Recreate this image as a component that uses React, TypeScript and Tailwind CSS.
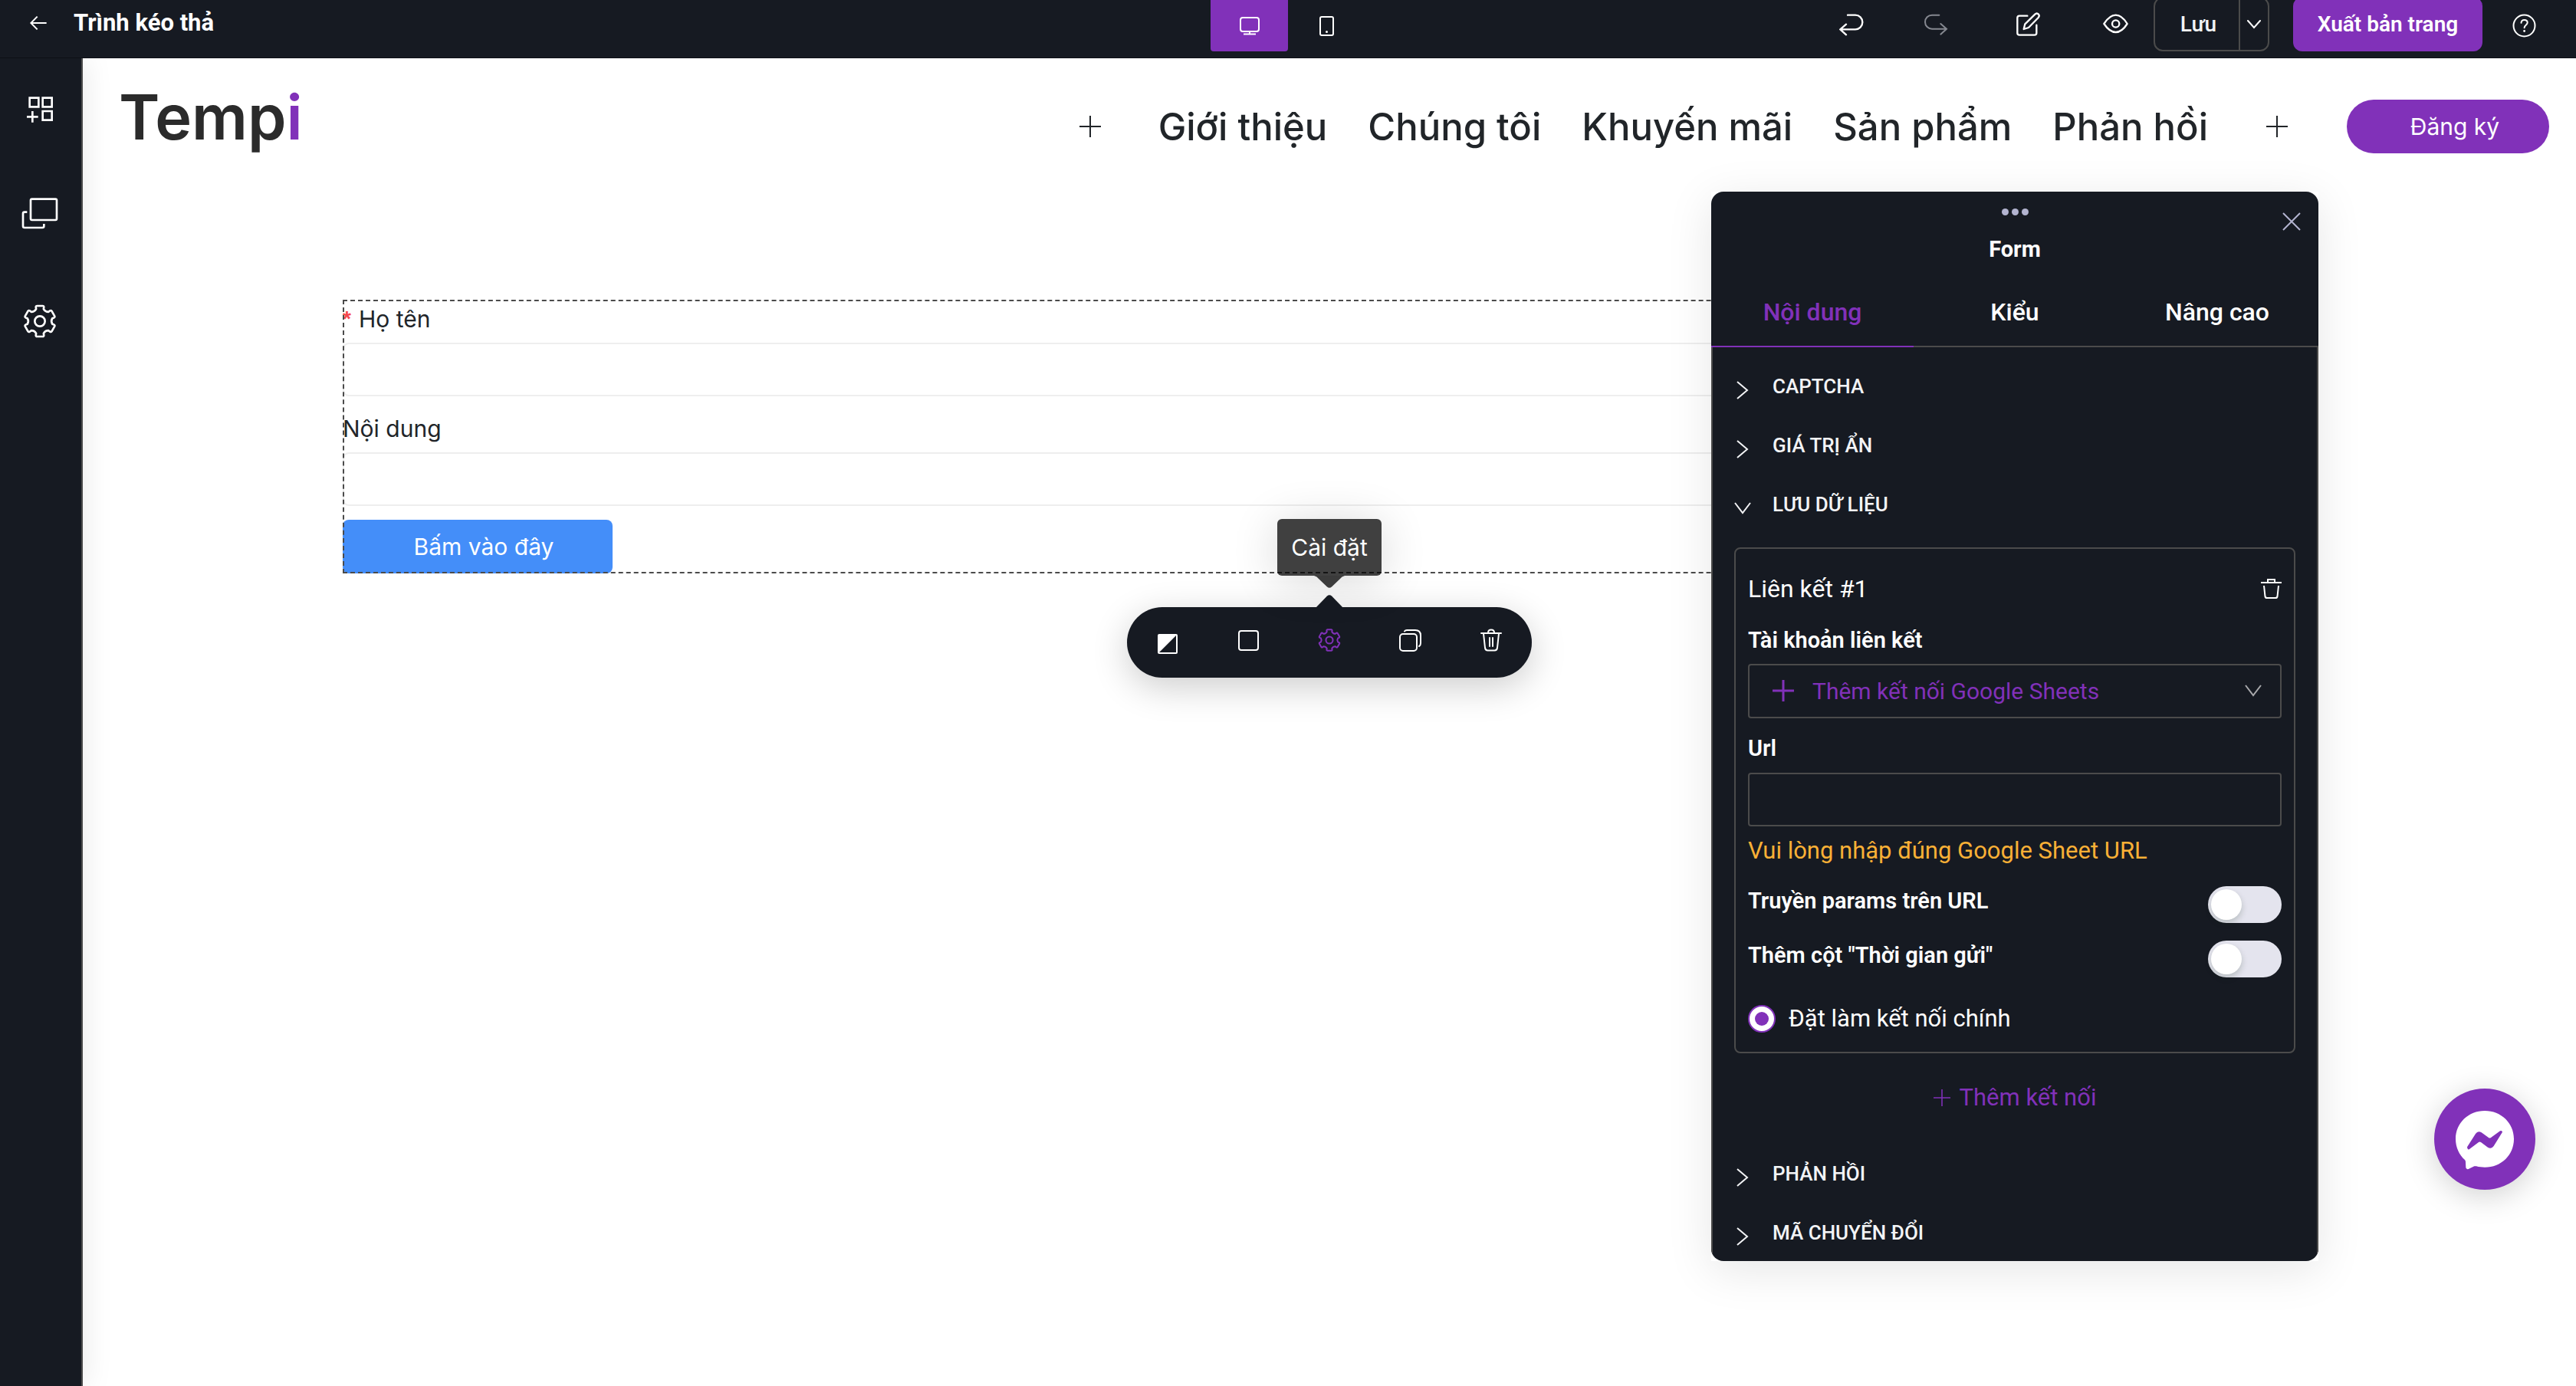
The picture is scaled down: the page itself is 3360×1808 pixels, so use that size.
import type { ReactNode } from "react";

const polar = (r: number, deg: number) => {
  const a = ((deg - 90) * Math.PI) / 180;
  return `${(66 + r * Math.cos(a)).toFixed(2)} ${(66 + r * Math.sin(a)).toFixed(2)}`;
};

const gearOutline =
  [0, 60, 120, 180, 240, 300]
    .map(
      (t, i) =>
        `${i === 0 ? "M" : "L"}${polar(57, t - 16)} Q${polar(62, t - 15)} ${polar(61, t - 10)} L${polar(61, t + 10)} Q${polar(62, t + 15)} ${polar(57, t + 16)} L${polar(50, t + 17)} Q${polar(42, t + 30)} ${polar(50, t + 43)}`,
    )
    .join(" ") + "Z";

function Gear({ className, stroke = 8 }: { className: string; stroke?: number }) {
  return (
    <svg viewBox="0 0 132 132" className={className} fill="none" stroke="currentColor" strokeWidth={stroke} strokeLinejoin="round">
      <path d={gearOutline} />
      <circle cx="66" cy="66" r="20" />
    </svg>
  );
}

function Plus({ className }: { className: string }) {
  return (
    <svg viewBox="0 0 28 28" className={className} fill="none" stroke="currentColor" strokeWidth="2">
      <path d="M14 0V28M0 14H28" />
    </svg>
  );
}

function ChevronRight() {
  return (
    <svg viewBox="0 0 22 24" className="h-6 w-[22px]" fill="none" stroke="currentColor" strokeWidth="2">
      <path d="M4 1L17 12L4 23" />
    </svg>
  );
}

function ChevronDown({ className }: { className: string }) {
  return (
    <svg viewBox="0 0 22 16" className={className} fill="none" stroke="currentColor" strokeWidth="2">
      <path d="M1 1L11 14L21 1" />
    </svg>
  );
}

function TopBar() {
  return (
    <header className="relative z-20 grid h-[76px] grid-cols-[1fr_auto_1fr] items-start overflow-hidden border-b border-[#0c0f16] bg-[#161a22] text-white">
      <div className="flex h-[59px] items-center gap-[35px] pl-[39px]">
        <button aria-label="Quay lại">
          <svg viewBox="0 0 66 54" className="h-[18px] w-[22px]" fill="none" stroke="currentColor" strokeWidth="6">
            <path d="M65 27H4M29 2L4 27L29 52" />
          </svg>
        </button>
        <h1 className="text-[31px] leading-10 font-bold">Trình kéo thả</h1>
      </div>

      <div className="-mt-1 flex h-[71px]">
        <button aria-label="Máy tính" className="flex w-[101px] items-center justify-center rounded-b bg-[#8131b9] pt-1">
          <svg viewBox="0 0 26 24" className="h-6 w-[26px]" fill="none" stroke="currentColor" strokeWidth="2">
            <rect x="1" y="1" width="24" height="18" rx="3" />
            <path d="M13 19V22M5 22.500H21" />
          </svg>
        </button>
        <button aria-label="Điện thoại" className="flex w-[101px] items-center justify-center pt-1">
          <svg viewBox="0 0 20 26" className="h-[26px] w-5" fill="none" stroke="currentColor" strokeWidth="2">
            <rect x="1" y="1" width="17" height="24" rx="2" />
            <circle cx="9.500" cy="20.500" r="1.500" fill="currentColor" stroke="none" />
          </svg>
        </button>
      </div>

      <div className="-mt-1 flex h-[71px] items-center justify-end pr-[51px]">
        <button aria-label="Hoàn tác" className="mr-[78px]">
          <svg viewBox="87 50 96 96" className="size-8" fill="none" stroke="currentColor" strokeWidth="7" strokeLinecap="round">
            <path d="M120 61H150A28 28 0 0 1 150 117H92M114 97L91 117L114 138" />
          </svg>
        </button>
        <button aria-label="Làm lại" className="mr-[88px] text-[#858890]">
          <svg viewBox="417 50 96 96" className="size-8" fill="none" stroke="currentColor" strokeWidth="6" strokeLinecap="round">
            <path d="M478 61H450A27 27 0 0 0 450 115H506M484 95L507 115L484 136" />
          </svg>
        </button>
        <button aria-label="Chỉnh sửa" className="mr-20">
          <svg viewBox="777 47 99 99" className="size-[33px]" fill="none" stroke="currentColor" strokeWidth="7" strokeLinecap="round" strokeLinejoin="round">
            <path d="M823 64H792Q784 64 784 72V131Q784 139 792 139H851Q859 139 859 131V100" />
            <path d="M809 116L814 96L853 58Q860 51 867 58Q872 64 866 71L828 110Z" />
          </svg>
        </button>
        <button aria-label="Xem trước" className="mr-8">
          <svg viewBox="1116 44 105 105" className="size-[35px]" fill="none" stroke="currentColor" strokeWidth="7" strokeLinejoin="round">
            <path d="M1123 95Q1145 61 1169 61Q1193 61 1214 95Q1193 128 1169 128Q1145 128 1123 95Z" />
            <circle cx="1169" cy="95" r="14" />
          </svg>
        </button>
        <div className="mr-[31px] flex h-full w-[151px] rounded-xl border-2 border-[#4b4b4b]">
          <button className="flex-1 border-r-2 border-[#4b4b4b] pl-1 text-[28px] font-medium text-gray-100">Lưu</button>
          <button aria-label="Tùy chọn lưu" className="flex w-9 items-center justify-center">
            <svg viewBox="0 0 18 12" className="h-3 w-[18px]" fill="none" stroke="currentColor" strokeWidth="2" strokeLinecap="round">
              <path d="M1 1L9 10L17 1" />
            </svg>
          </button>
        </div>
        <button className="mr-[38px] h-full w-[247px] rounded-xl bg-[#8131b9] text-[28px] font-semibold">Xuất bản trang</button>
        <button aria-label="Trợ giúp" className="pt-1">
          <svg viewBox="0 0 33 33" className="size-[33px]" fill="none" stroke="currentColor" strokeWidth="2" strokeLinecap="round">
            <circle cx="16.500" cy="16.500" r="14" />
            <path d="M12.500 12.800C12.700 10.300 14.400 9 16.600 9C19 9 20.700 10.500 20.700 12.600C20.700 15.600 16.600 16 16.600 19.200" />
            <circle cx="16.600" cy="23.500" r="1.400" fill="currentColor" stroke="none" />
          </svg>
        </button>
      </div>
    </header>
  );
}

function Sidebar() {
  return (
    <nav aria-label="Công cụ" className="z-10 flex w-[108px] shrink-0 flex-col items-center gap-[98px] border-r-2 border-[#4b4b4b] bg-[#161a22] pt-[50px] pr-[2px] text-white shadow-[0_0_40px_rgba(0,0,0,0.1)]">
      <button aria-label="Thành phần">
        <svg viewBox="105 377 102 102" className="size-[34px]" fill="none" stroke="currentColor" strokeWidth="8">
          <path d="M116 382H151V417H116ZM167 382H203V417H167ZM167 434H203V469H167ZM127 434V478M105 456H149" />
        </svg>
      </button>
      <button aria-label="Trang">
        <svg viewBox="86 774 144 123" className="h-[41px] w-12" fill="none" stroke="currentColor" strokeWidth="8">
          <rect x="122" y="779" width="102" height="82" rx="5" />
          <path d="M108 830H98Q92 830 92 836V885Q92 891 98 891H168Q174 891 174 885V876" />
        </svg>
      </button>
      <button aria-label="Thiết lập">
        <Gear className="size-11" />
      </button>
    </nav>
  );
}

const menu = ["Giới thiệu", "Chúng tôi", "Khuyến mãi", "Sản phẩm", "Phản hồi"];

function SiteHeader() {
  return (
    <header className="flex h-[178px] items-center justify-between pr-[35px] pl-[47px] text-[#212529]">
      <a href="#home" className="pb-6 text-[81px] leading-none font-semibold text-[#2b2b2b]">
        Temp<span className="text-[#8131b9]">i</span>
      </a>
      <div className="flex items-center">
        <button aria-label="Thêm mục bên trái">
          <Plus className="size-7" />
        </button>
        <nav aria-label="Trình đơn" className="mr-[76px] ml-[75px] flex gap-[53px] text-[49px] leading-none font-medium">
          {menu.map((item) => (
            <a key={item} href="#menu">
              {item}
            </a>
          ))}
        </nav>
        <button aria-label="Thêm mục bên phải">
          <Plus className="size-7" />
        </button>
        <button className="ml-[77px] h-[70px] w-[264px] rounded-full bg-[#8131b9] pl-[18px] text-[30px] text-white">Đăng ký</button>
      </div>
    </header>
  );
}

function ElementToolbar() {
  return (
    <div role="toolbar" aria-label="Công cụ phần tử" className="absolute top-full left-1/2 mt-[44px] grid h-[92px] w-[528px] -translate-x-1/2 grid-cols-5 rounded-full bg-[#161a22] text-white shadow-[0_12px_48px_rgba(0,0,0,0.2)]">
      <svg viewBox="0 0 36 17" className="absolute bottom-full left-1/2 -mb-px h-[17px] w-9 -translate-x-1/2 text-[#161a22]" fill="currentColor">
        <path d="M0 17L15 1.500Q18 -1 21 1.500L36 17Z" />
      </svg>
      <div role="tooltip" className="absolute bottom-full left-1/2 mb-[41px] flex h-[74px] w-[136px] -translate-x-1/2 items-center justify-center rounded-md bg-black/75 text-[30px] whitespace-nowrap shadow-[0_6px_60px_rgba(0,0,0,0.16)]">
        Cài đặt
        <svg viewBox="0 0 40 16" className="absolute top-full left-1/2 h-4 w-10 -translate-x-1/2 text-black/75" fill="currentColor">
          <path d="M0 0H40Q36 1 34 4L23 14.500Q20 17 17 14.500L6 4Q4 1 0 0Z" />
        </svg>
      </div>
      <button aria-label="Màu sắc" className="flex items-center justify-center pt-1">
        <svg viewBox="0 0 26 26" className="size-[26px]" fill="none" stroke="currentColor" strokeWidth="2">
          <rect x="1" y="1" width="24" height="24" rx="1" />
          <path d="M1 1H25L1 25Z" fill="currentColor" stroke="none" />
        </svg>
      </button>
      <button aria-label="Khung" className="flex items-center justify-center pb-[6px]">
        <svg viewBox="0 0 27 27" className="size-[27px]" fill="none" stroke="currentColor" strokeWidth="2">
          <rect x="1" y="1" width="25" height="25" rx="3" />
        </svg>
      </button>
      <button aria-label="Cài đặt" className="flex items-center justify-center pb-[6px] text-[#8131b9]">
        <Gear className="size-[30px]" stroke={9} />
      </button>
      <button aria-label="Nhân bản" className="flex items-center justify-center pb-[6px]">
        <svg viewBox="0 0 29 29" className="size-[29px]" fill="none" stroke="currentColor" strokeWidth="2" strokeLinecap="round">
          <rect x="1" y="6" width="22" height="22" rx="4" />
          <path d="M7 2.500Q8 1 10 1H21Q28 1 28 8V18Q28 21 26 22" />
        </svg>
      </button>
      <button aria-label="Xóa" className="flex items-center justify-center pb-[6px]">
        <svg viewBox="0 0 28 30" className="h-[30px] w-7" fill="none" stroke="currentColor" strokeWidth="2" strokeLinecap="round">
          <path d="M1 6H27M10 5.500Q10 1.500 14 1.500Q18 1.500 18 5.500M4 6.500L6 25Q6.500 28.500 9.500 28.500H18.500Q21.500 28.500 22 25L24 6.500M12 12V23M16 12V23" />
        </svg>
      </button>
    </div>
  );
}

function CanvasForm() {
  const input = "block h-[70px] w-full rounded-lg border-2 border-[#eeeeee] bg-transparent px-6";
  return (
    <div className="relative mx-auto mt-[137px] w-full max-w-[2574px] text-[30px] text-[#212529]">
      <form>
        <label htmlFor="name" className="flex h-[50px] items-center">
          <span className="mr-[10px] font-['Liberation_Sans',sans-serif] text-[28px] font-bold text-[#f5484d]">*</span>Họ tên
        </label>
        <input id="name" className={`mt-[6px] ${input}`} />
        <label htmlFor="content" className="mt-[17px] flex h-[50px] items-center">
          Nội dung
        </label>
        <input id="content" className={`mt-[6px] ${input}`} />
        <button type="button" className="mt-[18px] block h-[70px] w-[352px] rounded-lg bg-[#448ef9] pl-4 text-white">
          Bấm vào đây
        </button>
      </form>
      <div className="pointer-events-none absolute inset-0 border-2 border-dashed border-[#4b4b4b]" />
      <ElementToolbar />
    </div>
  );
}

function Section({ title, open = false, children }: { title: string; open?: boolean; children?: ReactNode }) {
  return (
    <section>
      <button aria-expanded={open} className="flex h-[77px] w-full items-center gap-[28px] text-left text-gray-100">
        <span className="pt-2">{open ? <ChevronDown className="h-4 w-[22px]" /> : <ChevronRight />}</span>
        <h3 className="text-[26px] font-medium">{title}</h3>
      </button>
      {children}
    </section>
  );
}

function SwitchRow({ id, label, className }: { id: string; label: string; className: string }) {
  return (
    <div className={`flex items-start justify-between ${className}`}>
      <label htmlFor={id} className="text-[29px] leading-[38px] font-semibold">
        {label}
      </label>
      <input
        id={id}
        type="checkbox"
        role="switch"
        className="h-12 w-24 appearance-none rounded-full bg-[#e4e4ee] p-1 before:block before:size-10 before:rounded-full before:bg-white before:shadow-[0_4px_8px_rgba(0,35,11,0.2)]"
      />
    </div>
  );
}

function LinkCard() {
  return (
    <div className="mt-[17px] rounded-lg border-2 border-[#4b4b4b] px-4 pt-6 pb-[25px]">
      <div className="flex h-14 items-center justify-between">
        <p className="text-[32px]">Liên kết #1</p>
        <button aria-label="Xóa liên kết">
          <svg viewBox="0 0 27 26" className="h-[26px] w-[27px]" fill="none" stroke="currentColor" strokeWidth="2">
            <path d="M0 5H27M9 5V1H18V5M4 9L5.500 23Q5.800 25 8 25H19Q21.200 25 21.500 23L23 9" />
          </svg>
        </button>
      </div>
      <label htmlFor="account" className="mt-5 mb-3 block text-[29px] leading-[38px] font-semibold">
        Tài khoản liên kết
      </label>
      <div className="relative">
        <select id="account" className="block h-[71px] w-full appearance-none rounded border-2 border-[#4b4b4b] bg-transparent pb-px pl-[82px] text-[30px] text-[#8131b9]">
          <option>Thêm kết nối Google Sheets</option>
        </select>
        <svg viewBox="0 0 28 28" className="pointer-events-none absolute top-[21px] left-8 size-7 text-[#8131b9]" stroke="currentColor" strokeWidth="3">
          <path d="M14 0V28M0 14H28" />
        </svg>
        <ChevronDown className="pointer-events-none absolute top-[27px] right-[26px] h-4 w-[22px] text-[#a8a9ac]" />
      </div>
      <label htmlFor="url" className="mt-5 mb-[13px] block text-[29px] leading-[38px] font-semibold">
        Url
      </label>
      <input id="url" type="url" className="block h-[70px] w-full rounded border-2 border-[#4b4b4b] bg-transparent px-4 text-[30px]" />
      <p className="mt-3 text-[31px] leading-10 text-[#f9b036]">Vui lòng nhập đúng Google Sheet URL</p>
      <SwitchRow id="params" label="Truyền params trên URL" className="mt-[26px]" />
      <SwitchRow id="sent-at" label={'Thêm cột "Thời gian gửi"'} className="mt-[23px]" />
      <label className="mt-9 flex h-9 items-center gap-[17px] text-[31px]">
        <input
          type="radio"
          name="primary"
          defaultChecked
          className="flex size-9 appearance-none items-center justify-center rounded-full border-2 border-[#8131b9] bg-white before:block before:size-[18px] before:rounded-full before:bg-[#8131b9]"
        />
        Đặt làm kết nối chính
      </label>
    </div>
  );
}

function SettingsPanel() {
  return (
    <aside aria-label="Form" className="absolute top-[250px] right-[336px] z-10 w-[792px] bg-white font-[Roboto,sans-serif] text-white shadow-[0_12px_56px_rgba(8,24,20,0.1)]">
      <div className="max-h-[1395px] overflow-hidden rounded-2xl bg-[#161a22]">
        <div className="relative flex flex-col items-center pt-[22px]">
          <div className="flex gap-1 text-[#b3b4d0]">
            <span className="size-[9px] rounded-full bg-current" />
            <span className="size-[9px] rounded-full bg-current" />
            <span className="size-[9px] rounded-full bg-current" />
          </div>
          <h2 className="mt-6 text-[29px] leading-10 font-bold">Form</h2>
          <button aria-label="Đóng" className="absolute top-[27px] right-[23px] text-[#b3b4d0]">
            <svg viewBox="0 0 24 24" className="size-6" stroke="currentColor" strokeWidth="2">
              <path d="M1 1L23 23M23 1L1 23" />
            </svg>
          </button>
        </div>
        <div role="tablist" className="mt-[18px] grid h-[90px] grid-cols-3 text-[32px] font-medium">
          <button role="tab" aria-selected="true" className="border-b-2 border-[#8131b9] text-[#8131b9]">
            Nội dung
          </button>
          <button role="tab" aria-selected="false" className="border-b-2 border-[#4b4b4b]">
            Kiểu
          </button>
          <button role="tab" aria-selected="false" className="border-b-2 border-[#4b4b4b]">
            Nâng cao
          </button>
        </div>
        <div className="border-x-2 border-[#4b4b4b] px-7 pt-[13px]">
          <Section title="CAPTCHA" />
          <Section title="GIÁ TRỊ ẨN" />
          <Section title="LƯU DỮ LIỆU" open>
            <LinkCard />
            <button className="mx-auto mt-[34px] mb-[37px] flex h-12 items-center gap-3 text-[31px] text-[#8131b9]">
              <Plus className="size-[22px]" />
              Thêm kết nối
            </button>
          </Section>
          <Section title="PHẢN HỒI" />
          <Section title="MÃ CHUYỂN ĐỔI" />
        </div>
      </div>
    </aside>
  );
}

function MessengerButton() {
  return (
    <button aria-label="Nhắn tin" className="fixed right-[53px] bottom-[256px] size-[132px] rounded-full bg-[#8131b9] shadow-[0_8px_40px_rgba(0,0,0,0.18)]">
      <svg viewBox="165 120 396 396" className="size-full">
        <path
          d="M363 207C299 207 249 255 249 317C249 350 263 379 285 399C287 401 288 404 288 407L289 430Q291 437 299 435L322 424Q326 423 330 424C341 427 352 428 363 428C427 428 477 380 477 317C477 255 427 207 363 207Z"
          fill="#fff"
        />
        <path
          d="M294 349L327 297Q336 284 350 292L378 312Q382 315 387 312L423 286Q430 282 432 290L398 345Q389 358 375 350L348 330Q343 327 339 330L302 358Q295 360 294 349Z"
          fill="#8131b9"
        />
      </svg>
    </button>
  );
}

export default function App() {
  return (
    <div className="relative flex min-h-screen flex-col bg-white font-[Roboto,sans-serif]">
      <TopBar />
      <div className="flex flex-1">
        <Sidebar />
        <main className="flex-1 font-[Inter,sans-serif]">
          <SiteHeader />
          <CanvasForm />
        </main>
      </div>
      <SettingsPanel />
      <MessengerButton />
    </div>
  );
}
